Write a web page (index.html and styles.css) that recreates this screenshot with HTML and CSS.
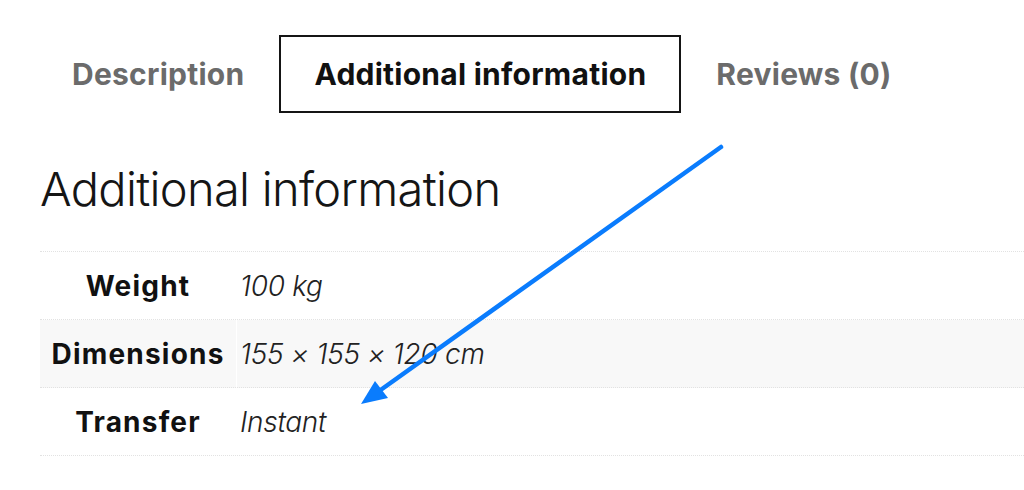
FILE: index.html
```html
<!DOCTYPE html>
<html>
<head>
<meta charset="utf-8">
<link rel="stylesheet" href="styles.css">
</head>
<body>
<div class="page">
  <ul class="tabs">
    <li class="tab">Description</li>
    <li class="tab active">Additional information</li>
    <li class="tab">Reviews (0)</li>
  </ul>
  <h2 class="title">Additional information</h2>
  <table class="attrs">
    <tr><th>Weight</th><td>100 kg</td></tr>
    <tr class="alt"><th>Dimensions</th><td>155 × 155 × 120 cm</td></tr>
    <tr><th>Transfer</th><td>Instant</td></tr>
  </table>
</div>
<svg class="arrow" width="1024" height="490" viewBox="0 0 1024 490">
  <line x1="721" y1="147" x2="375" y2="394" stroke="#0a7cfd" stroke-width="4.5" stroke-linecap="round"/>
  <polygon points="361,404 375,381 388,398" fill="#0a7cfd"/>
</svg>
</body>
</html>
```
FILE: styles.css
```css
html, body {
  margin: 0;
  padding: 0;
  background: #fff;
}
body {
  font-family: Inter, "Noto Sans", sans-serif;
  color: #111;
  position: relative;
  width: 1024px;
  height: 490px;
  overflow: hidden;
}
.page {
  padding: 35px 0 0 40px;
}
.tabs {
  list-style: none;
  margin: 0 0 0 -3px;
  padding: 0;
  display: flex;
}
.tab {
  box-sizing: border-box;
  height: 78px;
  padding: 0 33px;
  border: 2px solid transparent;
  display: flex;
  align-items: center;
  font-size: 30px;
  font-weight: 700;
  color: #6b6b6b;
  letter-spacing: 0.25px;
}
.tab.active {
  border-color: #151515;
  color: #111;
}
.title {
  margin: 49px 0 0 0;
  font-size: 47px;
  font-weight: 300;
  line-height: 53px;
  letter-spacing: -0.7px;
  color: #151515;
}
.attrs {
  margin: 36px 0 0 0;
  border-collapse: collapse;
  width: 1000px;
}
.attrs tr {
  border-top: 1px dotted #e2e2e2;
  border-bottom: 1px dotted #e2e2e2;
}
.attrs tr.alt {
  background: #f8f8f8;
}
.attrs th {
  width: 178px;
  height: 67px;
  padding: 0 9px;
  text-align: center;
  font-size: 28px;
  font-weight: 700;
  color: #111;
  border-right: 1px solid #fff;
  letter-spacing: 1.2px;
}
.attrs td {
  padding: 0 3px;
  font-size: 28px;
  font-style: italic;
  font-weight: 300;
  color: #222;
  letter-spacing: -0.3px;
}
.arrow {
  position: absolute;
  left: 0;
  top: 0;
  pointer-events: none;
}
```
